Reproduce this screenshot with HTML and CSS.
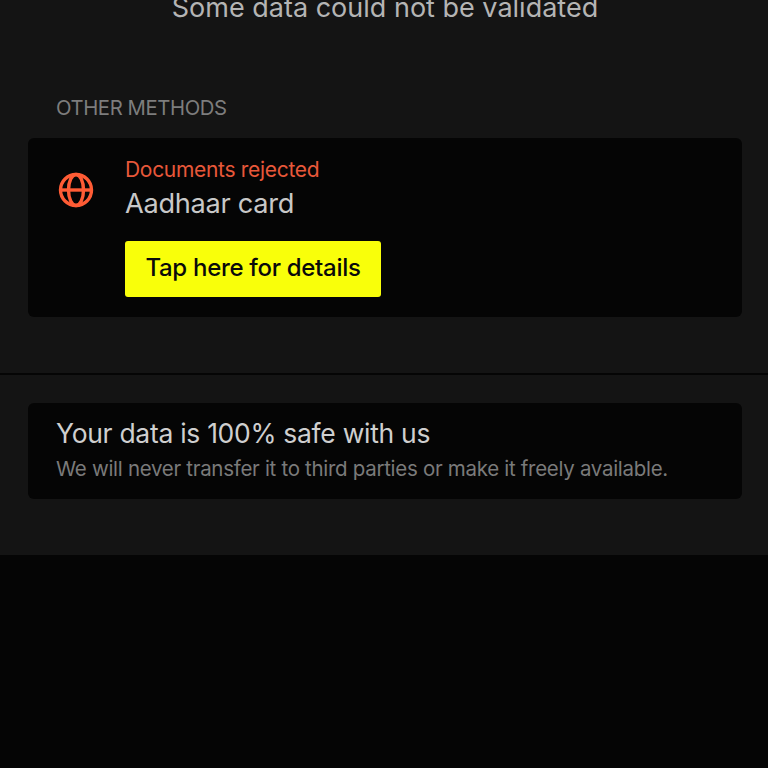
FILE: index.html
```html
<!DOCTYPE html>
<html lang="en">
<head>
<meta charset="utf-8">
<title>Verification</title>
<link rel="stylesheet" href="styles.css">
</head>
<body>
<main class="panel">
  <section class="methods">
    <h1 class="status">Some data could not be validated</h1>
    <h2 class="heading">OTHER METHODS</h2>
    <div class="card method">
      <svg class="globe" viewBox="0 0 36 36" fill="none" stroke="#ff5c35" stroke-width="3.4" aria-hidden="true">
        <circle cx="18" cy="18" r="15.5"/>
        <ellipse cx="18" cy="18" rx="7.5" ry="15.5"/>
        <path d="M2.5 18h31"/>
      </svg>
      <div class="method-body">
        <p class="rejected">Documents rejected</p>
        <p class="method-name">Aadhaar card</p>
        <button class="details" type="button">Tap here for details</button>
      </div>
    </div>
  </section>
  <section class="safety">
    <div class="card note">
      <p class="note-title">Your data is 100% safe with us</p>
      <p class="note-text">We will never transfer it to third parties or make it freely available.</p>
    </div>
  </section>
</main>
</body>
</html>
```
FILE: styles.css
```css
* { box-sizing: border-box; }
html, body { margin: 0; height: 768px; overflow: hidden; background: #050505; }
body { font-family: Inter, "Noto Sans", sans-serif; }
p, h1, h2 { margin: 0; font-weight: 400; }
.panel { display: flow-root; background: #141414; height: 555px; }
.methods { display: flow-root; height: 375px; padding: 0 26px 0 28px; border-bottom: 2px solid #050505; }
.status { margin-top: -10px; height: 36px; line-height: 36px; font-size: 27px; color: #b4b4b4; text-align: center; }
.heading { margin: 68px 0 16px 28px; height: 28px; line-height: 28px; font-size: 20.3px; color: #7d7d7d; letter-spacing: -0.4px; }
.card { background: #050505; border-radius: 6px; }
.method { display: flex; height: 179px; padding: 17px 30px 16px; gap: 31px; }
.globe { width: 36px; height: 36px; margin-top: 17px; flex: none; }
.method-body { display: flex; flex-direction: column; align-items: flex-start; }
.rejected { height: 30px; line-height: 30px; font-size: 21px; color: #e8583a; letter-spacing: -0.3px; }
.method-name { height: 38px; line-height: 38px; font-size: 27.2px; color: #c8c8c8; letter-spacing: -0.3px; }
.details { margin-top: 18px; width: 256px; height: 56px; border: 0; border-radius: 3px; background: #f9ff0a; color: #0a0a0a; font: 500 24px/54px Inter, "Noto Sans", sans-serif; letter-spacing: -0.3px; padding: 0 0 2px; }
.safety { padding: 28px 26px 0 28px; }
.note { height: 96px; padding: 13px 28px; }
.note-title { height: 34px; line-height: 34px; font-size: 26.5px; color: #cfcfcf; letter-spacing: -0.3px; }
.note-text { height: 34px; line-height: 38px; font-size: 20.5px; color: #7a7a7a; letter-spacing: -0.3px; }
```
